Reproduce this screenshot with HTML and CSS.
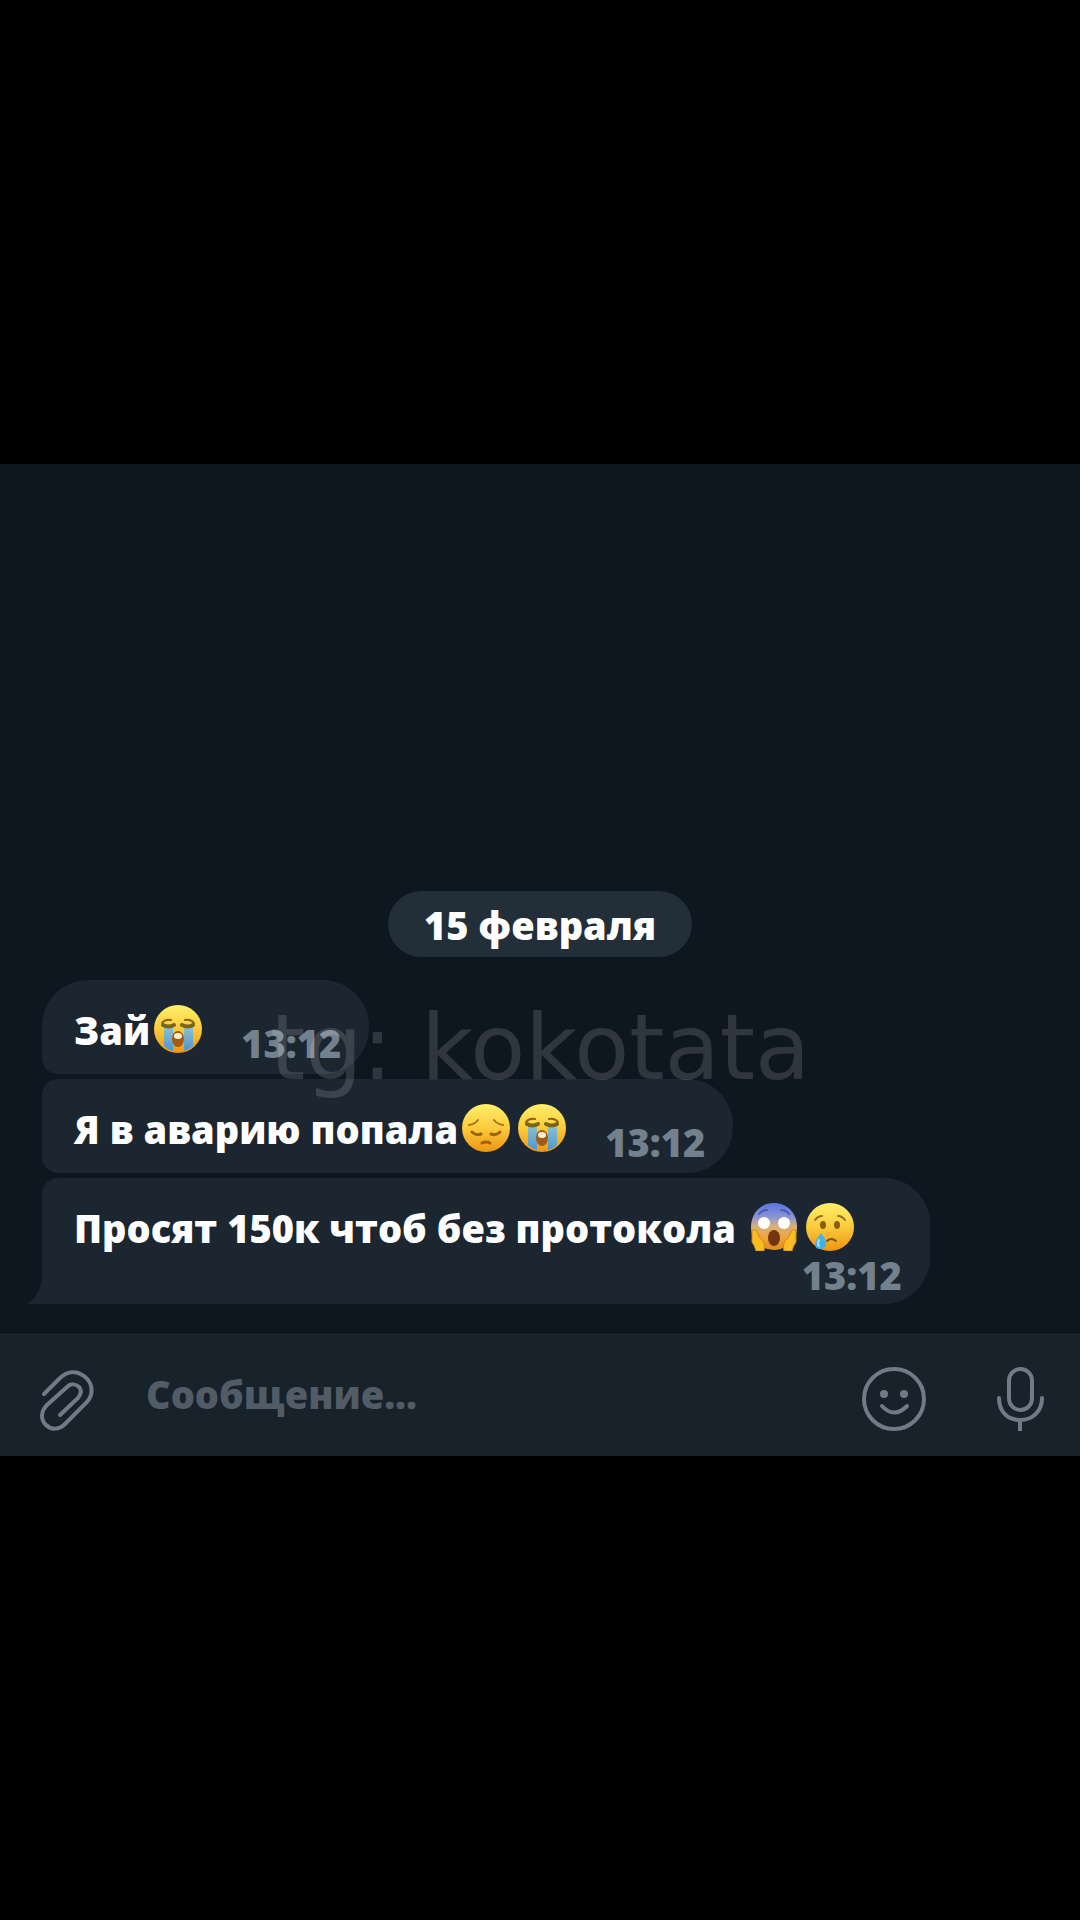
FILE: index.html
```html
<!DOCTYPE html>
<html lang="ru">
<head>
	<title>Чат</title>
	<meta charset="utf-8">
	<meta name="viewport" content="width=device-width, initial-scale=1">
	<link rel="stylesheet" href="styles.css">
</head>

<body>
	<!-- emoji set -->
	<svg class="defs" aria-hidden="true">
		<defs>
			<linearGradient id="skin" x1="0" y1="0" x2="0" y2="1">
				<stop offset="0" stop-color="#fff06a"/>
				<stop offset="0.5" stop-color="#fbcb3c"/>
				<stop offset="1" stop-color="#ee9412"/>
			</linearGradient>
			<linearGradient id="scared" x1="0" y1="0" x2="0" y2="1">
				<stop offset="0" stop-color="#5b74e0"/>
				<stop offset="0.3" stop-color="#8b95d4"/>
				<stop offset="0.5" stop-color="#d9b277"/>
				<stop offset="0.75" stop-color="#f0a33c"/>
				<stop offset="1" stop-color="#e38a1c"/>
			</linearGradient>
			<linearGradient id="tear" x1="0" y1="0" x2="0" y2="1">
				<stop offset="0" stop-color="#8fbfd0"/>
				<stop offset="1" stop-color="#4c97cf"/>
			</linearGradient>
			<symbol id="sob" viewBox="0 0 48 48">
				<circle cx="24" cy="24" r="24" fill="url(#skin)"/>
				<path d="M10 22h9v24q-5-1-9-5zM30 22h9v19q-4 4-9 5z" fill="url(#tear)"/>
				<path d="M8 18q3-4 9-3M40 18q-3-4-9-3" fill="none" stroke="#8a6512" stroke-width="2" stroke-linecap="round"/>
				<path d="M9 20q5 3 11 0M28 20q6 3 11 0" fill="none" stroke="#7c6414" stroke-width="4" stroke-linecap="round"/>
				<ellipse cx="24" cy="34" rx="6" ry="8" fill="#a35a12"/>
				<ellipse cx="24" cy="31" rx="4" ry="3" fill="#fff1cf"/>
			</symbol>
			<symbol id="pensive" viewBox="0 0 48 48">
				<circle cx="24" cy="24" r="24" fill="url(#skin)"/>
				<path d="M7 21q6-1 9-5M41 21q-6-1-9-5" fill="none" stroke="#a8751a" stroke-width="2" stroke-linecap="round"/>
				<path d="M10 28q4 4 9 2M29 30q5 2 9-2" fill="none" stroke="#94641a" stroke-width="3" stroke-linecap="round"/>
				<path d="M20 39q4-2 8 0" fill="none" stroke="#a8600f" stroke-width="3" stroke-linecap="round"/>
			</symbol>
			<symbol id="scream" viewBox="0 0 48 48">
				<path d="M24 0C11 0 1 10 1 24c0 10 6 22 23 23 17-1 23-13 23-23C47 10 37 0 24 0z" fill="url(#scared)"/>
				<path d="M9 11q3-4 8-4M39 11q-3-4-8-4" fill="none" stroke="#4a5bb0" stroke-width="2" stroke-linecap="round"/>
				<circle cx="14" cy="20" r="6" fill="#fff"/>
				<circle cx="34" cy="20" r="6" fill="#fff"/>
				<ellipse cx="24" cy="35" rx="6" ry="8" fill="#743410"/>
				<path d="M2 28q3-3 5 1l3 6q6 4 4 13H6q-1-5-4-9zM46 28q-3-3-5 1l-3 6q-6 4-4 13h8q1-5 4-9z" fill="#f8bd22" stroke="#d8890f"/>
			</symbol>
			<symbol id="cry" viewBox="0 0 48 48">
				<circle cx="24" cy="24" r="24" fill="url(#skin)"/>
				<path d="M9 17q3-4 7-4M39 17q-3-4-7-4" fill="none" stroke="#96701a" stroke-width="2" stroke-linecap="round"/>
				<ellipse cx="17" cy="22" rx="3" ry="4" fill="#85600f"/>
				<ellipse cx="31" cy="22" rx="3" ry="4" fill="#85600f"/>
				<path d="M21 38q4-4 9 0" fill="none" stroke="#7c5310" stroke-width="2" stroke-linecap="round"/>
				<path d="M15 30q6 8 5 12-1 4-6 4t-5-5q0-3 6-11z" fill="#42b2e8"/>
				<path d="M13 37q-2 4 0 6" fill="none" stroke="#a9e2f8" stroke-width="2" stroke-linecap="round"/>
			</symbol>
		</defs>
	</svg>

	<main class="chat">
		<section class="history">
			<h2 class="date">15 февраля</h2>

			<div class="messages">
				<div class="message first">
					<p>Зай<svg class="emoji" role="img" aria-label="😭"><use href="#sob"/></svg></p>
					<time>13:12</time>
				</div>
				<div class="message">
					<p>Я в аварию попала<svg class="emoji" role="img" aria-label="😔"><use href="#pensive"/></svg><svg class="emoji" role="img" aria-label="😭"><use href="#sob"/></svg></p>
					<time>13:12</time>
				</div>
				<div class="message last">
					<p>Просят 150к чтоб без протокола <svg class="emoji" role="img" aria-label="😱"><use href="#scream"/></svg><svg class="emoji" role="img" aria-label="😢"><use href="#cry"/></svg></p>
					<time>13:12</time>
					<svg class="tail" viewBox="0 0 20 32" aria-hidden="true"><path d="M20 0h-4Q16 24 0 32h20z"/></svg>
				</div>
				<div class="watermark">tg: kokotata</div>
			</div>
		</section>

		<form class="composer">
			<button type="button" aria-label="Прикрепить файл">
				<svg class="icon" viewBox="0 0 64 64"><path d="M6 27 21 12C29 4 38 3 46 9c9 7 10 18 3 26L27 57C21 63 13 63 8 58S2 45 9 38l20-18c4-4 9-3 12 0s2 7-1 11L22 48"/></svg>
			</button>
			<input type="text" placeholder="Сообщение..." aria-label="Сообщение">
			<button type="button" aria-label="Эмодзи">
				<svg class="icon" viewBox="0 0 64 64"><circle cx="32" cy="32" r="30"/><circle class="dot" cx="22" cy="27" r="4"/><circle class="dot" cx="42" cy="27" r="4"/><path d="M20 39q12 13 25 0"/></svg>
			</button>
			<button type="button" aria-label="Голосовое сообщение">
				<svg class="icon" viewBox="0 0 64 64"><rect x="21" y="2" width="23" height="41" rx="11.5"/><path d="M11 31c0 13 8 22 21 22s22-9 22-22M32 53v10"/></svg>
			</button>
		</form>
	</main>
</body>
</html>
```

FILE: styles.css
```css
* {
	box-sizing: border-box;
	margin: 0;
}

body {
	min-height: 100vh;
	display: flex;
	align-items: center;
	background-color: #000;
	color: #fff;
	font: 800 38px/48px "Open Sans", "Liberation Sans", sans-serif;
}

.defs {
	position: absolute;
	width: 0;
	height: 0;
}

.chat {
	width: 100%;
	min-height: 992px;
	display: flex;
	flex-direction: column;
	background-color: #0e1620;
}

.history {
	flex: 1;
	display: flex;
	flex-direction: column;
	justify-content: flex-end;
	padding: 24px 42px 28px;
}

.date {
	align-self: center;
	margin-bottom: 23px;
	padding: 10px 36px 8px;
	border-radius: 34px;
	background-color: #222e38;
	font-size: 38px;
	font-weight: 800;
}

.messages {
	position: relative;
	display: flex;
	flex-direction: column;
	align-items: flex-start;
	gap: 5px;
}

.message {
	position: relative;
	display: flex;
	gap: 35px;
	min-height: 94px;
	padding: 25px 28px 7px 32px;
	border-radius: 16px 46px 46px 16px;
	background-color: #1b2630;
}

.message.first {
	border-top-left-radius: 46px;
}

.message.last {
	flex-direction: column;
	gap: 0;
	padding-bottom: 5px;
	border-bottom-left-radius: 0;
}

.message p {
	height: 48px;
}

.last p {
	padding-right: 44px;
}

.message time {
	align-self: flex-end;
	color: #73808d;
}

.emoji {
	width: 48px;
	height: 48px;
	margin: 0 4px;
	vertical-align: -8px;
}

.tail {
	position: absolute;
	left: -16px;
	bottom: 0;
	width: 20px;
	height: 32px;
	fill: #1b2630;
}

.watermark {
	position: absolute;
	top: 16px;
	left: 0;
	right: 0;
	color: rgba(255, 255, 255, 0.14);
	font: 400 90px/104px "DejaVu Sans", sans-serif;
	text-align: center;
	pointer-events: none;
}

.composer {
	display: flex;
	align-items: center;
	gap: 44px;
	height: 124px;
	padding: 8px 28px 0 38px;
	border-top: 1px solid #0a1119;
	background-color: #18222b;
}

.composer button {
	padding: 0;
	border: 0;
	background: none;
	line-height: 0;
}

.composer button + button {
	margin-left: 18px;
}

.composer input {
	flex: 1;
	min-width: 0;
	padding: 0 0 10px;
	border: 0;
	outline: none;
	background: none;
	color: #fff;
	font: inherit;
}

.composer input::placeholder {
	color: #525c66;
	opacity: 1;
}

.icon {
	width: 64px;
	height: 64px;
	fill: none;
	stroke: #717b85;
	stroke-width: 4;
	stroke-linecap: round;
}

.dot {
	fill: #717b85;
	stroke: none;
}
```
